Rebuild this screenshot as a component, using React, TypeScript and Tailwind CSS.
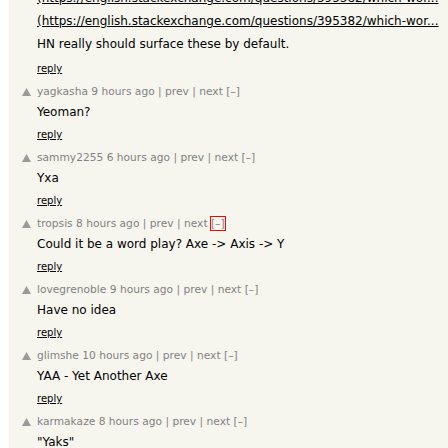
type Comment = {
  user: string;
  age: string;
  text: string;
  focused?: boolean;
};

const comments: Comment[] = [
  { user: 'yagkasha', age: '9 hours ago', text: 'Yeoman?' },
  { user: 'sammy2255', age: '6 hours ago', text: 'Yxa' },
  { user: 'tropsis', age: '8 hours ago', text: 'Could it be a word play? Axe -> Axis -> Y', focused: true },
  { user: 'lovegrenoble', age: '9 hours ago', text: 'Have no idea' },
  { user: 'glimshe', age: '10 hours ago', text: 'YAA - Yet Another Axe' },
  { user: 'karmakaze', age: '8 hours ago', text: '"Yaks"' },
];

const link = '(https://english.stackexchange.com/questions/395382/which-wor...';

function VoteArrow() {
  return (
    <svg width="9" height="8" viewBox="0 0 9 8" className="block">
      <polygon points="4.5,0 9,8 0,8" fill="#9a9a9a" />
    </svg>
  );
}

function Reply() {
  return (
    <div className="h-[26px] leading-[26px] text-[10px]">
      <a className="text-black underline">reply</a>
    </div>
  );
}

function CommentRow({ c }: { c: Comment }) {
  return (
    <div className="flex">
      <div className="w-[28px] shrink-0 pt-[6px] pl-[13px]">
        <VoteArrow />
      </div>
      <div className="min-w-0">
        <div className="h-[20px] leading-[20px] text-[10.67px] text-[#828282] whitespace-nowrap">
          <span>{c.user}</span> <span>{c.age}</span> | <span>prev</span> | <span>next</span>{' '}
          <span className={c.focused ? 'outline outline-1 outline-[#ff0000]' : ''}>[–]</span>
        </div>
        <div className="leading-[20px] text-[12px] text-black whitespace-nowrap">{c.text}</div>
        <Reply />
      </div>
    </div>
  );
}

export default function App() {
  return (
    <div className="h-[448px] w-[448px] overflow-hidden bg-white font-['DejaVu_Sans',Verdana,sans-serif]">
      <div className="ml-[9px] h-full bg-[#f6f6ef] overflow-hidden">
        <div className="-mt-[13px]">
          <div className="pl-[28px]">
            <div className="text-[12px] text-black">
              <div className="leading-[23px] whitespace-nowrap">
                <a className="underline">{link}</a>
              </div>
              <div className="leading-[23px] whitespace-nowrap">
                <a className="underline">{link}</a>
              </div>
              <div className="leading-[23px] whitespace-nowrap">HN really should surface these by default.</div>
            </div>
            <Reply />
          </div>
          {comments.map((c) => (
            <CommentRow key={c.user} c={c} />
          ))}
        </div>
      </div>
    </div>
  );
}
